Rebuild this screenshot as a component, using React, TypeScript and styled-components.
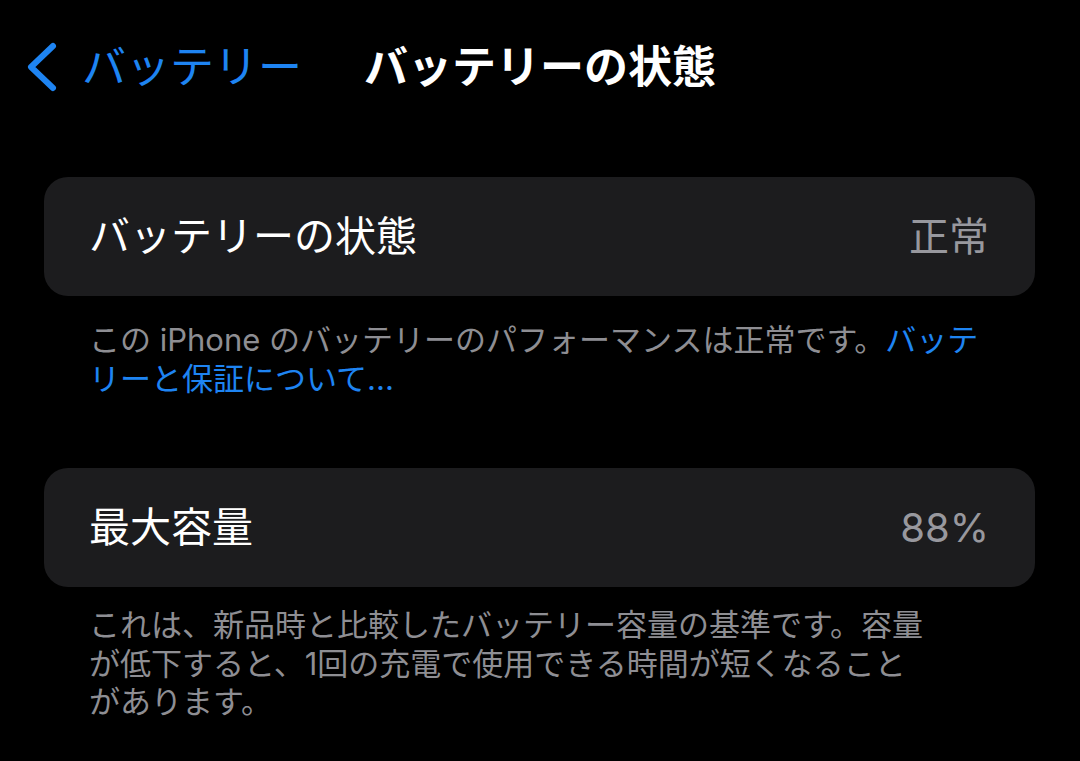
import React from 'react';
import styled, { createGlobalStyle } from 'styled-components';

const GlobalStyle = createGlobalStyle`
  html, body {
    margin: 0;
    padding: 0;
    background: #000000;
  }
  body {
    font-family: "Inter", "Noto Sans CJK JP", sans-serif;
    -webkit-font-smoothing: antialiased;
  }
`;

export default function App() {
  return (
    <>
      <GlobalStyle />
      <Screen>
        <NavBar>
          <BackButton>
            <svg width="34" height="52" viewBox="0 0 34 52">
              <polyline
                points="29,5 7,26 29,47"
                fill="none"
                stroke="#1e84f2"
                strokeWidth="6"
                strokeLinecap="round"
                strokeLinejoin="round"
              />
            </svg>
            <BackLabel>バッテリー</BackLabel>
          </BackButton>
          <NavTitle>バッテリーの状態</NavTitle>
          <span />
        </NavBar>

        <Content>
          <Card>
            <RowLabel>バッテリーの状態</RowLabel>
            <RowValue>正常</RowValue>
          </Card>
          <Footnote $top={25}>
            この iPhone のバッテリーのパフォーマンスは正常です。<Link>バッテ<br />リーと保証について...</Link>
          </Footnote>

          <Card $top={70}>
            <RowLabel>最大容量</RowLabel>
            <RowValue>88%</RowValue>
          </Card>
          <Footnote $top={19}>
            これは、新品時と比較したバッテリー容量の基準です。容量<br />
            が低下すると、1回の充電で使用できる時間が短くなること<br />
            があります。
          </Footnote>
        </Content>
      </Screen>
    </>
  );
}

const Screen = styled.div`
  width: 1080px;
  height: 761px;
  overflow: hidden;
  background: #000000;
`;

const NavBar = styled.header`
  display: grid;
  grid-template-columns: 1fr auto 1fr;
  align-items: center;
  height: 100px;
  margin-top: 17px;
`;

const BackButton = styled.div`
  display: flex;
  align-items: center;
  gap: 24px;
  padding-left: 24px;
`;

const BackLabel = styled.span`
  color: #1e84f2;
  font-size: 44px;
  line-height: 1;
`;

const NavTitle = styled.h1`
  margin: 0;
  color: #ffffff;
  font-size: 44px;
  font-weight: 700;
  line-height: 1;
`;

const Content = styled.main`
  padding: 60px 45px 0 44px;
`;

const Card = styled.section<{ $top?: number }>`
  display: flex;
  align-items: center;
  justify-content: space-between;
  height: 119px;
  margin-top: ${p => p.$top ?? 0}px;
  padding: 0 46px 0 45px;
  border-radius: 24px;
  background: #1c1c1e;
`;

const RowLabel = styled.span`
  color: #ffffff;
  font-size: 41px;
  line-height: 1;
`;

const RowValue = styled.span`
  color: #98989e;
  font-size: 40px;
  line-height: 1;
`;

const Footnote = styled.p<{ $top: number }>`
  margin: ${p => p.$top}px 0 0;
  padding: 0 46px 0 45px;
  color: #8e8e93;
  font-size: 31px;
  line-height: 38.5px;
  white-space: nowrap;
`;

const Link = styled.span`
  color: #1e84f2;
`;
